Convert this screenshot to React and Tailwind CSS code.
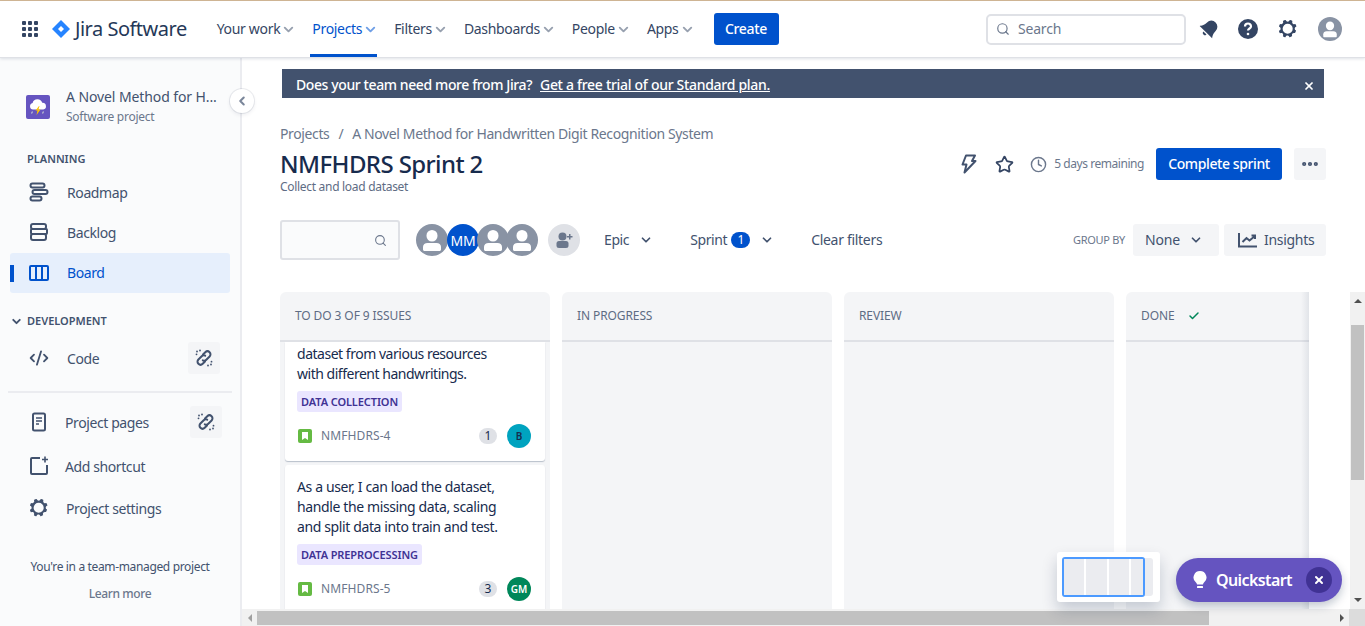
import { ChevronDown, ChevronLeft, Star, Clock, MoreHorizontal, Search, Check, X, CodeXml } from 'lucide-react';

const GEAR = 'M11.701 16.7a5.002 5.002 0 110-10.003 5.002 5.002 0 010 10.004m8.368-3.117a1.995 1.995 0 01-1.346-1.885c0-.876.563-1.613 1.345-1.885a.48.48 0 00.315-.574 8.947 8.947 0 00-.836-1.993.477.477 0 00-.598-.195 2.04 2.04 0 01-1.29.08 1.988 1.988 0 01-1.404-1.395 2.04 2.04 0 01.076-1.297.478.478 0 00-.196-.597 8.98 8.98 0 00-1.975-.826.479.479 0 00-.574.314 1.995 1.995 0 01-1.885 1.346 1.994 1.994 0 01-1.884-1.345.482.482 0 00-.575-.315c-.708.2-1.379.485-2.004.842a.47.47 0 00-.198.582A2.002 2.002 0 014.445 7.06a.478.478 0 00-.595.196 8.946 8.946 0 00-.833 1.994.48.48 0 00.308.572 1.995 1.995 0 011.323 1.877c0 .867-.552 1.599-1.324 1.877a.479.479 0 00-.308.57 8.99 8.99 0 00.723 1.79.477.477 0 00.624.194c.595-.273 1.343-.264 2.104.238.117.077.225.185.302.3.527.8.515 1.58.2 2.188a.473.473 0 00.198.621 8.96 8.96 0 001.78.706.479.479 0 00.574-.307 1.995 1.995 0 011.885-1.345c.881 0 1.62.569 1.887 1.353a.48.48 0 00.574.313 8.964 8.964 0 002.02-.848.477.477 0 00.19-.609 2.001 2.001 0 012.495-2.667.479.479 0 00.586-.204c.36-.64.653-1.326.847-2.05a.478.478 0 00-.313-.58';

function Gear({ size = 24, color = '#42526e' }) {
  return (
    <svg width={size} height={size} viewBox="0 0 24 24">
      <path d={GEAR} fill={color} fillRule="evenodd" />
    </svg>
  );
}

function UserAvatar({ size = 32, className = '' }) {
  return (
    <svg width={size} height={size} viewBox="0 0 32 32" className={className}>
      <circle cx="16" cy="16" r="16" fill="#8993a4" />
      <rect x="10.5" y="6" width="11" height="11.5" rx="5.5" fill="#fff" />
      <path d="M7 25.5v-2.5c0-2.6 2-4 4.5-4h9c2.5 0 4.5 1.4 4.5 4v2.5c0 .8-.7 1.5-1.5 1.5h-15C7.7 27 7 26.3 7 25.5z" fill="#fff" />
    </svg>
  );
}

function BrokenLink() {
  return (
    <svg width="20" height="20" viewBox="0 0 20 20" fill="none" stroke="#42526e" strokeWidth="2" strokeLinecap="round">
      <path d="M9 6.5l2.3-2.3a3 3 0 014.3 4.3l-3.3 3.3a3 3 0 01-3.5.5" />
      <path d="M11 13.5l-2.3 2.3a3 3 0 01-4.3-4.3l3.3-3.3a3 3 0 013.5-.5" />
      <path d="M3 3.5h.01M6 2.5h.01M2.5 6.3h.01M17 16.5h.01M14 17.5h.01M17.5 13.7h.01" strokeWidth="1.8" />
    </svg>
  );
}

function NavItem({ label, active }) {
  return (
    <div className={`relative flex h-full items-center text-[14px] tracking-[-0.32px] ${active ? 'text-[#0052cc]' : 'text-[#344563]'}`}>
      <span className="pb-[2px]">{label}</span>
      <ChevronDown size={15} strokeWidth={3} className={`ml-[1px] ${active ? 'text-[#6f9fe6]' : 'text-[#97a0af]'}`} />
      {active && <div className="absolute bottom-0 left-[-2px] right-[1px] h-[3px] bg-[#0052cc]" />}
    </div>
  );
}

function SideRow({ icon, label, textLeft = 'ml-[16px]', h = 'h-[40px]', action }) {
  return (
    <div className={`flex items-center justify-between ${h}`}>
      <div className="flex items-center pl-[27px]">
        <div className="flex w-[24px] justify-center">{icon}</div>
        <span className={`text-[14px] tracking-[-0.4px] text-[#42526e] ${textLeft}`}>{label}</span>
      </div>
      {action}
    </div>
  );
}

function LinkBtn() {
  return (
    <div className="flex h-[32px] w-[32px] items-center justify-center rounded-[3px] bg-[#f4f5f7]">
      <BrokenLink />
    </div>
  );
}

function Sidebar() {
  return (
    <aside className="flex w-[242px] shrink-0 flex-col border-r-2 border-[#ebecf0] bg-[#fafbfc]">
      <div className="mt-[29px] flex items-center pl-[26px]">
        <div className="flex h-[24px] w-[24px] items-center justify-center rounded-[2px] bg-[#6554c0]">
          <svg width="20" height="18" viewBox="0 0 20 18">
            <path d="M5 11.5a3.3 3.3 0 01-.4-6.5A5 5 0 0114.2 4.8a3.4 3.4 0 011.1 6.7z" fill="#fff" />
            <path d="M11 8l-3.5 4.5h2L8.5 17l4-5.500h-2l1-3.500z" fill="#ffc400" />
            <path d="M4.5 13.5l-1 2M15.5 13.5l-1 2" stroke="#c1c7d0" strokeWidth="1.2" />
          </svg>
        </div>
        <div className="ml-[16px]">
          <div className="text-[14px] leading-[20px] tracking-[-0.1px] text-[#42526e]">A Novel Method for H...</div>
          <div className="text-[12px] leading-[20px] tracking-[-0.25px] text-[#6b778c]">Software project</div>
        </div>
      </div>
      <div className="mt-[24px] pl-[27px] text-[11px] font-semibold leading-[16px] text-[#42526e]">PLANNING</div>
      <div className="mt-[5px]">
        <SideRow label="Roadmap" icon={
          <svg width="20" height="20" viewBox="0 0 20 20" fill="none" stroke="#42526e" strokeWidth="2">
            <rect x="1.5" y="1.5" width="14" height="4" rx="2" />
            <rect x="3.5" y="8" width="15" height="4" rx="2" />
            <rect x="1.5" y="14.5" width="11" height="4" rx="2" />
          </svg>
        } />
        <SideRow label="Backlog" icon={
          <svg width="20" height="20" viewBox="0 0 20 20" fill="none" stroke="#42526e" strokeWidth="2">
            <rect x="2" y="2" width="15" height="5" rx="2" />
            <rect x="2" y="7" width="16" height="5" rx="1" />
            <rect x="2" y="12" width="15" height="6" rx="2" />
          </svg>
        } />
        <div className="relative mx-[10px] mt-[1px] flex h-[40px] items-center rounded-[3px] bg-[#e6effc] pl-[17px]">
          <div className="absolute left-0 top-[12px] h-[17px] w-[4px] bg-[#0052cc]" />
          <div className="flex w-[24px] justify-center">
            <svg width="20" height="16" viewBox="0 0 20 16" fill="none" stroke="#0052cc" strokeWidth="2">
              <rect x="1" y="1" width="18" height="14" rx="1" />
              <path d="M7 1v14M13 1v14" />
            </svg>
          </div>
          <span className="ml-[16px] pb-[2px] text-[14px] tracking-[-0.4px] text-[#0052cc]">Board</span>
        </div>
      </div>
      <div className="mt-[20px] flex items-center pl-[10px] text-[11px] font-semibold leading-[16px] text-[#42526e]">
        <ChevronDown size={13} strokeWidth={3.5} />
        <span className="ml-[4px]">DEVELOPMENT</span>
      </div>
      <div className="mt-[13px] pr-[20px]">
        <SideRow label="Code" h="h-[32px]" icon={<CodeXml size={20} strokeWidth={2.2} color="#42526e" />} action={<LinkBtn />} />
      </div>
      <div className="mx-[8px] mt-[17px] h-[2px] bg-[#ebecf0]" />
      <div className="mt-[13px] pr-[18px]">
        <SideRow label="Project pages" textLeft="ml-[14px]" h="h-[32px]" icon={
          <svg width="20" height="20" viewBox="0 0 20 20" fill="none" stroke="#42526e" strokeWidth="2">
            <rect x="4" y="1.5" width="12" height="17" rx="1.5" />
            <path d="M7 6h6M7 9h6M7 12h3" strokeWidth="1.5" />
          </svg>
        } action={<LinkBtn />} />
      </div>
      <div className="mt-[8px]">
        <SideRow label="Add shortcut" textLeft="ml-[14px]" icon={
          <svg width="20" height="20" viewBox="0 0 20 20" fill="none" stroke="#42526e" strokeWidth="2">
            <path d="M11 2H3a1 1 0 00-1 1v14a1 1 0 001 1h14a1 1 0 001-1V9" />
            <path d="M16 .5v6M13 3.5h6" strokeWidth="1.6" />
          </svg>
        } />
      </div>
      <div>
        <SideRow label="Project settings" textLeft="ml-[15px]" h="h-[44px]" icon={<Gear />} />
      </div>
      <div className="mt-[28px] w-[240px] text-center text-[12px] leading-[18px] tracking-[-0.35px] text-[#42526e]">You're in a team-managed project</div>
      <div className="mt-[9px] w-[240px] text-center text-[12px] font-medium leading-[18px] tracking-[-0.4px] text-[#6b778c]">Learn more</div>
    </aside>
  );
}

function Tag({ children }) {
  return <span className="inline-block rounded-[3px] bg-[#eae6ff] px-[4px] text-[11px] font-semibold leading-[21px] tracking-[-0.1px] text-[#403294]">{children}</span>;
}

function CardFoot({ id, count, who, color, textColor, gap }) {
  return (
    <div className={`flex items-center justify-between pr-[2px] ${gap}`}>
      <div className="flex items-center pl-[1px]">
        <svg width="14" height="14" viewBox="0 0 14 14">
          <rect width="14" height="14" rx="2" fill="#65ba43" />
          <path d="M4 3h6v8L7 9l-3 2z" fill="#fff" />
        </svg>
        <span className="ml-[9px] text-[12px] tracking-[0.1px] text-[#6b778c]">{id}</span>
      </div>
      <div className="flex items-center">
        <span className="flex h-[16px] w-[18px] items-center justify-center rounded-full bg-[#dfe1e6] text-[12px] text-[#172b4d]">{count}</span>
        <span className={`ml-[10px] flex h-[24px] w-[24px] items-center justify-center rounded-full text-[10px] font-semibold ${color} ${textColor}`}>{who}</span>
      </div>
    </div>
  );
}

function Column({ title, extra, children }) {
  return (
    <div className="flex w-[270px] shrink-0 flex-col overflow-hidden rounded-t-[6px] bg-[#f4f5f7]">
      <div className="flex h-[50px] shrink-0 items-center border-b-2 border-[#dfe1e6] pl-[15px] text-[12px] tracking-[-0.1px] text-[#5e6c84]">
        {title}
        {extra}
      </div>
      {children}
    </div>
  );
}

export default function App() {
  return (
    <div className="relative flex h-[626px] w-[1365px] flex-col overflow-hidden bg-white font-['Noto_Sans',sans-serif] text-[#172b4d]">
      <div className="h-[1px] shrink-0 bg-[#d3b895]" />
      <header className="z-10 flex h-[57px] shrink-0 items-center justify-between border-b border-[#dfe1e6] bg-white pl-[22px] pr-[23px] shadow-[0_1px_3px_rgba(9,30,66,0.13)]">
        <div className="flex h-full items-center">
          <svg width="16" height="16" viewBox="0 0 16 16" fill="#344563">
            <rect x="0" y="0" width="4" height="4" rx="1" /><rect x="6" y="0" width="4" height="4" rx="1" /><rect x="12" y="0" width="4" height="4" rx="1" />
            <rect x="0" y="6" width="4" height="4" rx="1" /><rect x="6" y="6" width="4" height="4" rx="1" /><rect x="12" y="6" width="4" height="4" rx="1" />
            <rect x="0" y="12" width="4" height="4" rx="1" /><rect x="6" y="12" width="4" height="4" rx="1" /><rect x="12" y="12" width="4" height="4" rx="1" />
          </svg>
          <svg width="18" height="18" viewBox="0 0 18 18" className="ml-[14px]">
            <path d="M9 0l9 9-9 9-9-9z" fill="#2684ff" />
            <path d="M9 6l3 3-3 3-3-3z" fill="#fff" />
          </svg>
          <span className="ml-[5px] pb-[1px] text-[20px] tracking-[-0.5px] text-[#253858]">Jira Software</span>
          <div className="ml-[30px] flex h-full items-center gap-[16px]">
            <NavItem label="Your work" />
            <NavItem label="Projects" active />
            <NavItem label="Filters" />
            <NavItem label="Dashboards" />
            <NavItem label="People" />
            <NavItem label="Apps" />
          </div>
          <button className="ml-[19px] h-[32px] w-[65px] rounded-[3px] bg-[#0052cc] pb-[2px] text-[14px] font-medium tracking-[-0.3px] text-white">Create</button>
        </div>
        <div className="flex items-center">
          <div className="flex h-[31px] w-[200px] items-center rounded-[5px] border-2 border-[#dfe1e6] pl-[8px] text-[#6b778c]">
            <Search size={14} strokeWidth={2} />
            <span className="ml-[8px] pb-[2px] text-[14px] tracking-[-0.2px]">Search</span>
          </div>
          <svg width="22" height="22" viewBox="0 0 20 20" fill="#344563" className="ml-[12px]">
            <g transform="rotate(45 10 10)">
              <path d="M10 1.5a5.5 5.5 0 00-5.500 5.500c0 4-1.500 5.500-2.500 7h16c-1-1.500-2.500-3-2.500-7A5.500 5.500 0 0010 1.500z" />
              <path d="M8 15.200h4a2 2 0 01-4 0z" />
            </g>
          </svg>
          <svg width="22" height="22" viewBox="0 0 22 22" className="ml-[17px]">
            <circle cx="11" cy="11" r="10" fill="#344563" />
            <path d="M8 8.5a3 3 0 116 0c0 2-3 2-3 4" fill="none" stroke="#fff" strokeWidth="2.2" />
            <circle cx="11" cy="16" r="1.3" fill="#fff" />
          </svg>
          <div className="ml-[17px]"><Gear size={24} color="#344563" /></div>
          <UserAvatar size={24} className="ml-[18px]" />
        </div>
      </header>

      <div className="flex min-h-0 flex-1">
        <Sidebar />
        <main className="flex min-w-0 flex-1 flex-col">
          <div className="flex min-h-0 flex-1 flex-col overflow-hidden pl-[38px]">
            <div className="ml-[2px] mr-[41px] mt-[11px] flex h-[29px] shrink-0 items-center justify-between bg-[#42526e] pl-[14px] pr-[9px] text-white">
              <div className="pt-[1px] text-[14px] font-medium tracking-[-0.4px]">
                Does your team need more from Jira?<span className="ml-[8px] tracking-[-0.3px] underline">Get a free trial of our Standard plan.</span>
              </div>
              <X size={12} strokeWidth={3.5} className="mt-[5px]" />
            </div>

            <div className="mt-[26px] flex items-center text-[14px] leading-[20px] tracking-[-0.38px] text-[#6b778c]">
              <span>Projects</span><span className="mx-[9px]">/</span><span>A Novel Method for Handwritten Digit Recognition System</span>
            </div>

            <div className="mr-[39px] mt-[4px] flex items-start justify-between">
              <div>
                <h1 className="text-[24px] font-medium leading-[32px] tracking-[-0.6px] text-[#172b4d]">NMFHDRS Sprint 2</h1>
                <div className="text-[12px] leading-[14px] tracking-[-0.3px] text-[#5e6c84]">Collect and load dataset</div>
              </div>
              <div className="flex items-center">
                <svg width="20" height="20" viewBox="0 0 20 20" fill="none" stroke="#42526e" strokeWidth="2" strokeLinejoin="round">
                  <path d="M8 1.5h9l-3 5.500h3.500L6.500 18.500l2-8H4.500z" />
                </svg>
                <Star size={19} strokeWidth={2.2} color="#344563" className="ml-[17px]" />
                <Clock size={17} strokeWidth={2} color="#6b778c" className="ml-[16px]" />
                <span className="ml-[7px] text-[12px] tracking-[-0.45px] text-[#6b778c]">5 days remaining</span>
                <button className="ml-[12px] h-[32px] w-[126px] rounded-[3px] bg-[#0052cc] pb-[1px] text-[14px] font-medium tracking-[-0.4px] text-white">Complete sprint</button>
                <div className="ml-[12px] flex h-[32px] w-[32px] items-center justify-center rounded-[3px] bg-[#f4f5f7]">
                  <MoreHorizontal size={20} strokeWidth={3} color="#42526e" />
                </div>
              </div>
            </div>

            <div className="mr-[39px] mt-[26px] flex items-center justify-between">
              <div className="flex items-center">
                <div className="flex h-[40px] w-[120px] items-center justify-end rounded-[3px] border-2 border-[#dfe1e6] bg-[#fafbfc] pr-[11px] text-[#6b778c]">
                  <Search size={13} strokeWidth={2} />
                </div>
                <div className="ml-[16px] flex items-center">
                  <UserAvatar />
                  <span className="z-[1] ml-[-1px] flex h-[32px] w-[32px] items-center justify-center rounded-full bg-[#0052cc] text-[14px] tracking-[-0.3px] text-white">MM</span>
                  <UserAvatar className="z-[2] ml-[-2px]" />
                  <UserAvatar className="z-[3] ml-[-3px]" />
                </div>
                <div className="ml-[10px] flex h-[32px] w-[32px] items-center justify-center rounded-full bg-[#dfe1e6]">
                  <svg width="20" height="20" viewBox="0 0 20 20" fill="#6b778c">
                    <circle cx="8.5" cy="6.5" r="4" />
                    <rect x="2.5" y="11" width="12" height="7" rx="2.5" />
                    <path d="M15 4h1.5v2H18.5v1.5H16.5v2H15v-2h-2V6h2z" />
                  </svg>
                </div>
                <div className="ml-[24px] flex items-center text-[14px] tracking-[-0.4px] text-[#42526e]">
                  <span className="pb-[2px]">Epic</span><ChevronDown size={14} strokeWidth={3} className="ml-[10px]" />
                </div>
                <div className="ml-[37px] flex items-center text-[14px] tracking-[-0.4px] text-[#42526e]">
                  <span className="pb-[2px]">Sprint</span>
                  <span className="ml-[4px] flex h-[16px] w-[19px] items-center justify-center rounded-full bg-[#0052cc] text-[12px] text-white">1</span>
                  <ChevronDown size={14} strokeWidth={3} className="ml-[10px]" />
                </div>
                <div className="ml-[37px] pb-[2px] text-[14px] tracking-[-0.3px] text-[#42526e]">Clear filters</div>
              </div>
              <div className="flex items-center">
                <span className="text-[11px] tracking-[-0.3px] text-[#6b778c]">GROUP BY</span>
                <div className="ml-[8px] flex h-[32px] w-[86px] items-center rounded-[3px] bg-[#f4f5f7] pl-[12px] text-[14px] tracking-[-0.2px] text-[#42526e]">
                  <span className="pb-[2px]">None</span><ChevronDown size={14} strokeWidth={3} className="ml-[9px]" />
                </div>
                <div className="ml-[5px] flex h-[32px] w-[102px] items-center rounded-[3px] bg-[#f4f5f7] pl-[14px] text-[14px] tracking-[-0.3px] text-[#42526e]">
                  <svg width="20" height="16" viewBox="0 0 20 16" fill="none" stroke="#42526e" strokeWidth="2">
                    <path d="M1 1v13.5h18" />
                    <path d="M4.5 10l4-4 3 2.500L17 4M13.500 3.500H17V7" />
                  </svg>
                  <span className="ml-[6px] pb-[2px]">Insights</span>
                </div>
              </div>
            </div>

            <div className="mt-[32px] flex min-h-0 flex-1 justify-between">
              <div className="relative flex w-[1029px] gap-[12px] overflow-hidden">
                <Column title="TO DO 3 OF 9 ISSUES">
                  <div className="flex min-h-0 flex-1 flex-col gap-[4px] overflow-hidden px-[5px]">
                    <div className="shrink-0 rounded-b-[3px] bg-white px-[12px] pb-[13px] pt-[2px] shadow-[0_1px_1px_rgba(9,30,66,0.25)]">
                      <div className="text-[14px] leading-[20px] tracking-[-0.48px]">dataset from various resources<br />with different handwritings.</div>
                      <div className="mt-[4px]"><Tag>DATA COLLECTION</Tag></div>
                      <CardFoot gap="mt-[12px]" id="NMFHDRS-4" count="1" who="B" color="bg-[#00a3bf]" textColor="text-[#172b4d]" />
                    </div>
                    <div className="shrink-0 rounded-[3px] bg-white px-[12px] pb-[14px] pt-[12px] shadow-[0_1px_1px_rgba(9,30,66,0.25)]">
                      <div className="text-[14px] leading-[20px] tracking-[-0.38px]">As a user, I can load the dataset,<br />handle the missing data, scaling<br />and split data into train and test.</div>
                      <div className="mt-[4px]"><Tag>DATA PREPROCESSING</Tag></div>
                      <CardFoot gap="mt-[12px]" id="NMFHDRS-5" count="3" who="GM" color="bg-[#00875a]" textColor="text-white" />
                    </div>
                  </div>
                </Column>
                <Column title="IN PROGRESS" />
                <Column title="REVIEW" />
                <Column title="DONE" extra={<Check size={12} strokeWidth={3} color="#00875a" className="ml-[13px]" />} />
                <div className="absolute bottom-0 right-0 top-0 w-[8px] bg-gradient-to-r from-transparent to-[rgba(9,30,66,0.08)]" />
              </div>
              <div className="flex w-[15px] shrink-0 flex-col items-center bg-[#f1f1f1]">
                <div className="mt-[7px] h-0 w-0 border-x-[4px] border-b-[4px] border-x-transparent border-b-[#505050]" />
                <div className="mt-[22px] h-[155px] w-[13px] bg-[#c1c1c1]" />
                <div className="mb-[7px] mt-auto h-0 w-0 border-x-[4px] border-t-[4px] border-x-transparent border-t-[#505050]" />
              </div>
            </div>
          </div>
          <div className="flex h-[17px] shrink-0 items-center justify-between bg-[#f1f1f1]">
            <div className="flex items-center">
              <div className="flex w-[15px] justify-center">
                <div className="h-0 w-0 border-y-[4px] border-r-[4px] border-y-transparent border-r-[#a0a0a0]" />
              </div>
              <div className="h-[14px] w-[952px] bg-[#c1c1c1]" />
            </div>
            <div className="flex h-full items-center">
              <div className="mr-[5px] h-0 w-0 border-y-[4px] border-l-[4px] border-y-transparent border-l-[#505050]" />
              <div className="h-full w-[16px] bg-[#dcdcdc]" />
            </div>
          </div>
        </main>
      </div>

      <div className="absolute left-[230px] top-[89px] z-20 flex h-[24px] w-[24px] items-center justify-center rounded-full bg-white text-[#7a869a] shadow-[0_0_0_1px_rgba(9,30,66,0.08),0_2px_4px_rgba(9,30,66,0.08)]">
        <ChevronLeft size={14} strokeWidth={3.5} />
      </div>

      <div className="absolute left-[1057px] top-[552px] z-20 flex h-[50px] w-[103px] items-center rounded-[3px] bg-white pl-[5px] shadow-[0_8px_16px_rgba(9,30,66,0.2)]">
        <div className="h-[38px] w-[91px] rounded-[3px] bg-[#ebecf0]" />
      </div>
      <div className="absolute left-[1062px] top-[557px] z-30 flex h-[40px] w-[83px] gap-[2px] overflow-hidden rounded-[3px] border-2 border-[#4c9aff] bg-white">
        <div className="h-full w-[21px] bg-[#ebecf0]" />
        <div className="h-full w-[21px] bg-[#ebecf0]" />
        <div className="h-full w-[21px] bg-[#ebecf0]" />
        <div className="h-full w-[12px] bg-[#ebecf0]" />
      </div>

      <div className="absolute left-[1176px] top-[558px] z-20 flex h-[44px] w-[166px] items-center rounded-full bg-[#6554c0] pl-[17px] text-white shadow-[0_4px_10px_rgba(9,30,66,0.25)]">
        <svg width="14" height="18" viewBox="0 0 14 18" fill="#fff">
          <path d="M7 0a6.5 6.5 0 00-4 11.6c.6.5 1 1.2 1 1.9h6c0-.7.4-1.4 1-1.9A6.5 6.5 0 007 0z" />
          <rect x="4" y="15" width="6" height="2" rx=".5" />
        </svg>
        <span className="ml-[9px] text-[16px] font-semibold tracking-[-0.6px]">Quickstart</span>
        <span className="absolute right-[10px] top-[9px] flex h-[26px] w-[26px] items-center justify-center rounded-full bg-[#403294]">
          <X size={12} strokeWidth={4} />
        </span>
      </div>
    </div>
  );
}
